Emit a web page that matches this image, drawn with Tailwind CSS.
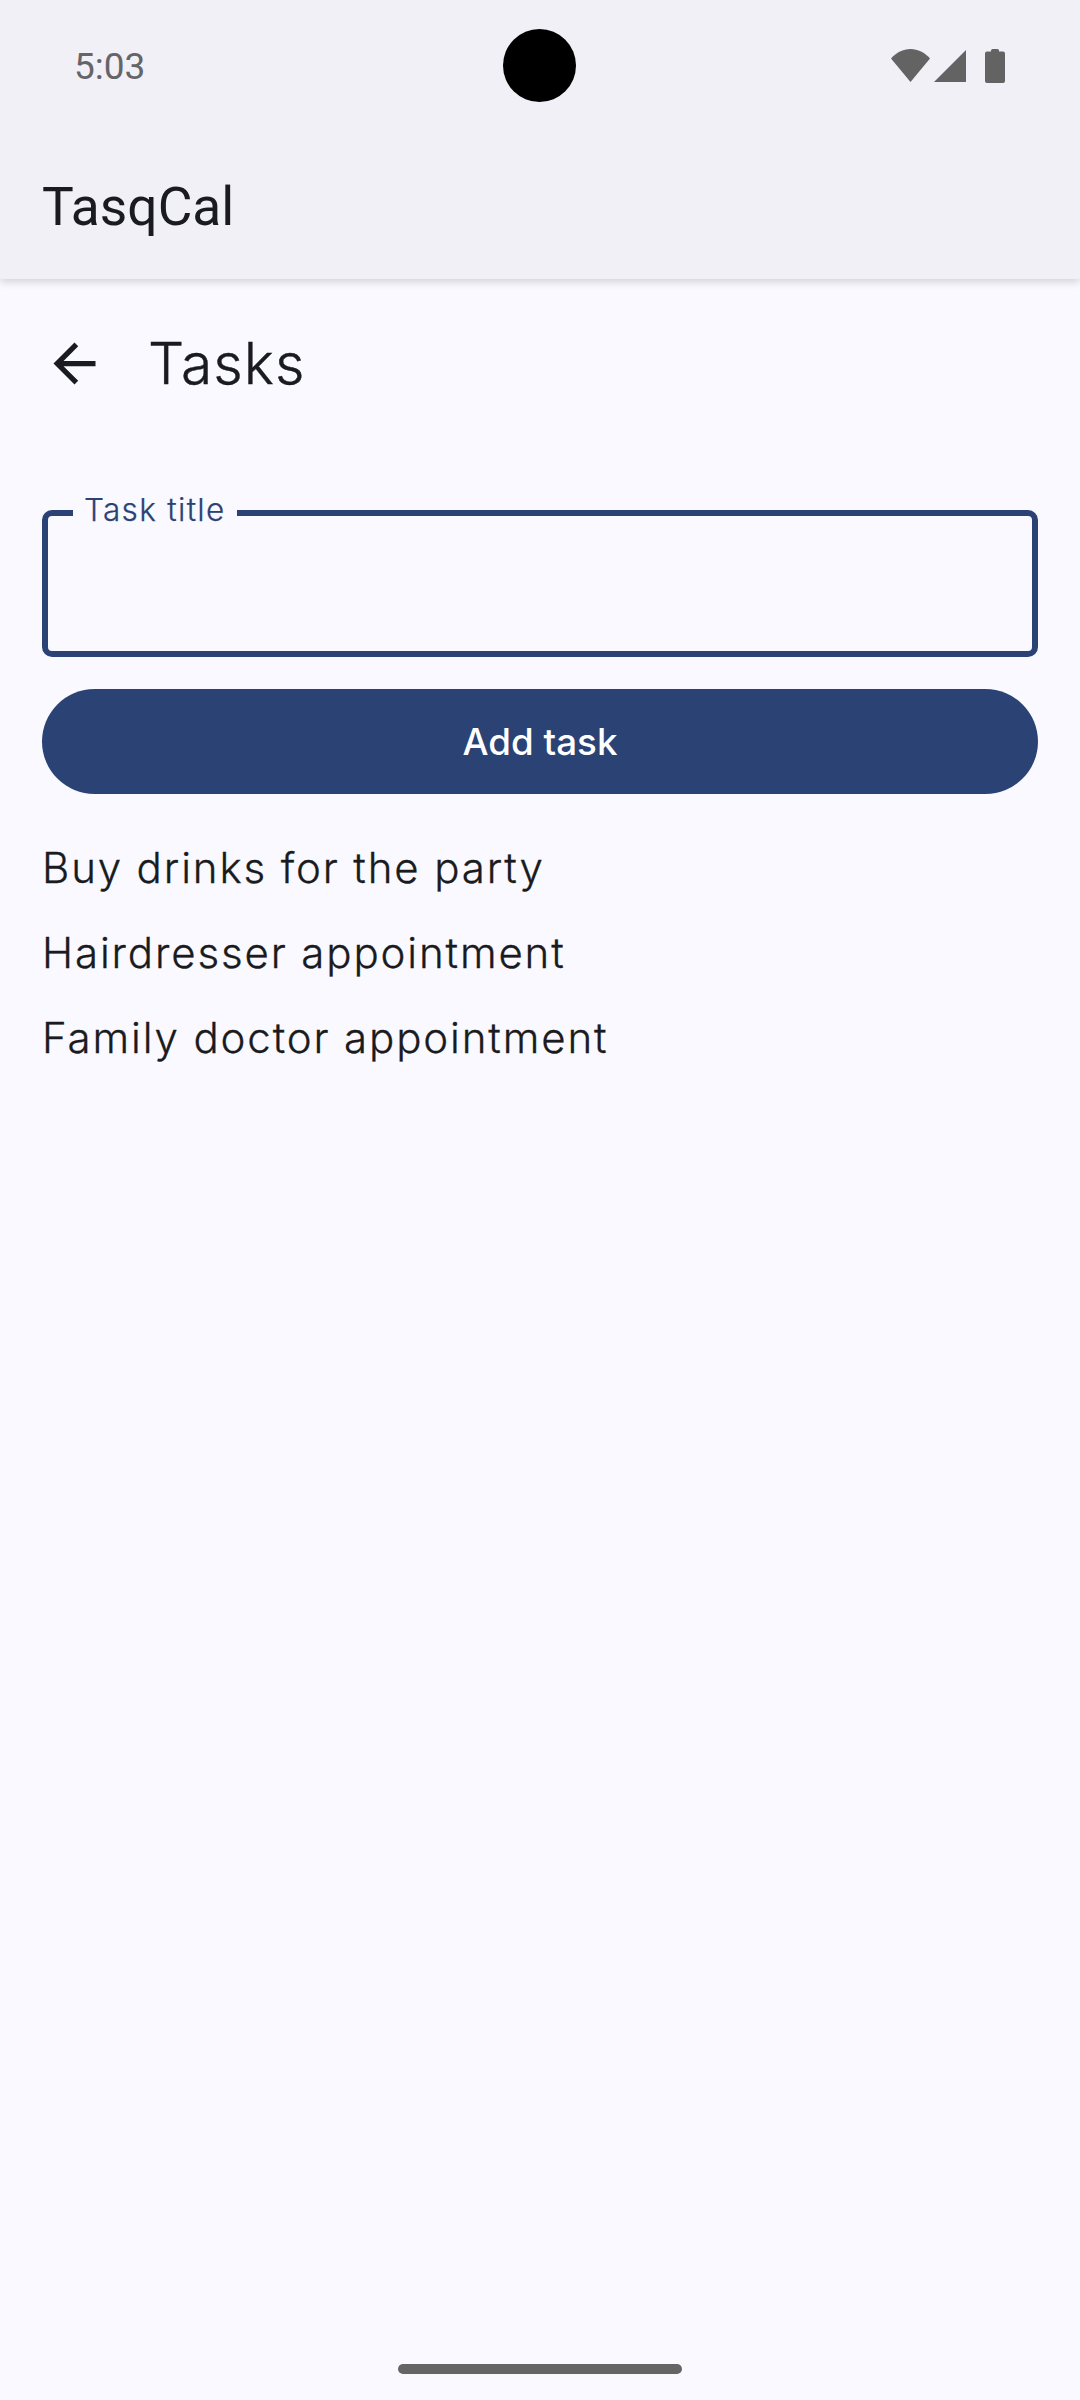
<!DOCTYPE html>
<html lang="en">
<head>
    <meta charset="UTF-8">
    <meta name="viewport" content="width=device-width, initial-scale=1.0">
    <title>TasqCal</title>
    <script src="https://cdn.jsdelivr.net/npm/@tailwindcss/browser@4"></script>
</head>
<body class="w-[1080px] h-[2400px] bg-[#f9f9ff] font-['Inter',sans-serif] text-[#1a1b20] overflow-hidden relative">

    <!-- status bar + app bar -->
    <header class="h-[279px] bg-[#f0f0f6] shadow-[0_3px_8px_rgba(0,0,0,0.16)] relative">
        <div class="h-[131px] flex items-center justify-between pl-[74px] pr-[75px] relative">
            <span class="font-['Roboto',sans-serif] text-[37px] text-[#656569] mt-[3px]">5:03</span>
            <div class="absolute left-[503px] top-[29px] w-[73px] h-[73px] rounded-full bg-black"></div>
            <div class="flex items-center">
                <svg class="w-[39px] h-[33px]" viewBox="0 0 39 33"><path fill="#636363" d="M0 9.5C5.5 3.5 12 0 19.5 0S33.500 3.500 39 9.500L19.500 33z"/></svg>
                <svg class="ml-[4px] w-[32px] h-[32px]" viewBox="0 0 32 32"><path fill="#636363" d="M32 0V32H0z"/></svg>
                <svg class="ml-[19px] w-[20px] h-[34px]" viewBox="0 0 20 34"><path fill="#636363" d="M6 2.500V1.500Q6 0 7.500 0h5Q14 0 14 1.500v1h4Q20 2.500 20 4.500V32q0 2-2 2H2q-2 0-2-2V4.500q0-2 2-2z"/></svg>
            </div>
        </div>
        <div class="h-[148px] flex items-center pl-[42px]">
            <h1 class="font-['Roboto',sans-serif] text-[53.3px] leading-none mt-[6px]">TasqCal</h1>
        </div>
    </header>

    <!-- page title -->
    <div class="mt-[52px] h-[64px] flex items-center pl-[43px]">
        <svg class="w-[63px] h-[63px]" viewBox="0 0 24 24"><path fill="#1a1b20" d="M20 11H7.830l5.590-5.590L12 4l-8 8 8 8 1.410-1.410L7.830 13H20v-2z"/></svg>
        <h2 class="ml-[42px] text-[57px] font-light tracking-[1px] [-webkit-text-stroke:0.4px_#1a1b20] leading-none">Tasks</h2>
    </div>

    <main class="mt-[115px] px-[42px]">
        <div class="relative h-[147px] border-[6px] border-[#2a4374] rounded-[10px]">
            <label class="absolute left-[25px] -top-[25px] px-[11px] bg-[#f9f9ff] text-[31.5px] font-light leading-[38px] tracking-[1.3px] [-webkit-text-stroke:0.25px_#2a4374] text-[#2a4374]">Task title</label>
        </div>

        <button class="mt-[32px] w-full h-[105px] rounded-full bg-[#2a4374] text-white text-[36.75px] font-medium">Add task</button>

        <ul class="mt-[31px] text-[42px] font-light tracking-[1.86px] [-webkit-text-stroke:0.3px_#1a1b20]">
            <li class="h-[85px] flex items-center">Buy drinks for the party</li>
            <li class="h-[85px] flex items-center">Hairdresser appointment</li>
            <li class="h-[85px] flex items-center">Family doctor appointment</li>
        </ul>
    </main>

    <!-- gesture bar -->
    <div class="absolute left-[398px] top-[2364px] w-[284px] h-[10px] rounded-full bg-[#656565]"></div>

</body>
</html>
